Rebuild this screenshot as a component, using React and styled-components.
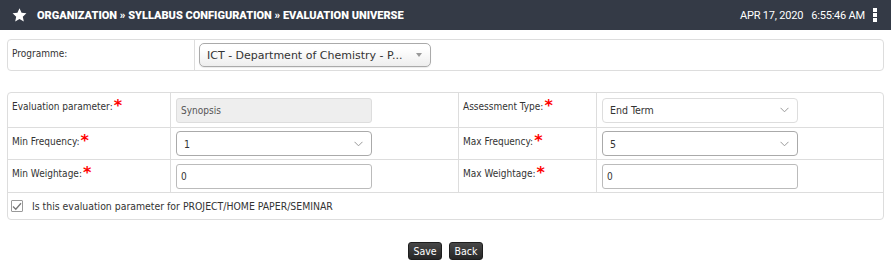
import React from 'react'
import styled, { createGlobalStyle } from 'styled-components'

const GlobalStyle = createGlobalStyle`
  html, body {
    margin: 0;
    padding: 0;
    background: #fff;
  }
  body {
    font-family: "DejaVu Sans Condensed", "DejaVu Sans", sans-serif;
    color: #333;
  }
  * { box-sizing: border-box; }
`

const fields = [
  { left: 'Evaluation parameter:', leftInput: { kind: 'disabled', value: 'Synopsis' }, right: 'Assessment Type:', rightInput: { kind: 'select', value: 'End Term', soft: true } },
  { left: 'Min Frequency:', leftInput: { kind: 'select', value: '1' }, right: 'Max Frequency:', rightInput: { kind: 'select', value: '5' } },
  { left: 'Min Weightage:', leftInput: { kind: 'text', value: '0' }, right: 'Max Weightage:', rightInput: { kind: 'text', value: '0' } },
]

const Chevron = () => (
  <svg width="9" height="6" viewBox="0 0 9 6">
    <path d="M0.5 0.8 L4.5 4.8 L8.5 0.8" fill="none" stroke="#999" strokeWidth="1" />
  </svg>
)

const Field = ({ kind, value, soft }) => {
  if (kind === 'select') {
    return (
      <SelectBox soft={soft}>
        <span>{value}</span>
        <Chevron />
      </SelectBox>
    )
  }
  return <TextBox disabled={kind === 'disabled'}>{value}</TextBox>
}

const Label = ({ children }) => (
  <LabelText>
    {children}
    <Req>*</Req>
  </LabelText>
)

export default function App() {
  return (
    <>
      <GlobalStyle />
      <Header>
        <HeaderLeft>
          <svg width="15" height="14" viewBox="0 0 24 23">
            <path
              d="M12 0.6 L15.4 7.9 L23.4 8.8 L17.4 14.3 L19.1 22.2 L12 18.2 L4.9 22.2 L6.6 14.3 L0.6 8.8 L8.6 7.9 Z"
              fill="#fff"
            />
          </svg>
          <Crumbs>ORGANIZATION » SYLLABUS CONFIGURATION » EVALUATION UNIVERSE</Crumbs>
        </HeaderLeft>
        <HeaderRight>
          <Clock>
            APR 17, 2020<Gap />6:55:46 AM
          </Clock>
          <Kebab>
            <i /><i /><i />
          </Kebab>
        </HeaderRight>
      </Header>

      <Page>
        <ProgrammeBox>
          <ProgLabel>Programme:</ProgLabel>
          <ProgCell>
            <DropButton>
              <span>ICT - Department of Chemistry - P...</span>
              <Triangle />
            </DropButton>
          </ProgCell>
        </ProgrammeBox>

        <FormGrid>
          {fields.map((row, i) => (
            <React.Fragment key={i}>
              <Cell col={1}><Label>{row.left}</Label></Cell>
              <Cell col={2} center><Field {...row.leftInput} /></Cell>
              <Cell col={3}><Label>{row.right}</Label></Cell>
              <Cell col={4} center><Field {...row.rightInput} /></Cell>
            </React.Fragment>
          ))}
          <CheckRow>
            <CheckBox>
              <svg width="10" height="9" viewBox="0 0 10 9">
                <path d="M1 4.5 L3.8 7.2 L9 1.2" fill="none" stroke="#777" strokeWidth="1.3" />
              </svg>
            </CheckBox>
            <CheckText>Is this evaluation parameter for PROJECT/HOME PAPER/SEMINAR</CheckText>
          </CheckRow>
        </FormGrid>

        <Actions>
          <DarkButton>Save</DarkButton>
          <DarkButton>Back</DarkButton>
        </Actions>
      </Page>
    </>
  )
}

const Header = styled.div`
  height: 30px;
  background: #343a46;
  display: flex;
  align-items: center;
  justify-content: space-between;
  padding: 0 14px 0 12px;
  color: #fff;
`

const HeaderLeft = styled.div`
  display: flex;
  align-items: center;
  gap: 10px;
`

const Crumbs = styled.div`
  font-family: Roboto, "Liberation Sans", sans-serif;
  font-weight: 900;
  font-size: 11px;
  letter-spacing: 0;
  padding-top: 1px;
`

const HeaderRight = styled.div`
  display: flex;
  align-items: center;
  gap: 8px;
`

const Clock = styled.div`
  font-family: Roboto, "Liberation Sans", sans-serif;
  font-size: 11px;
  letter-spacing: -0.2px;
  padding-top: 1px;
`

const Gap = styled.span`
  display: inline-block;
  width: 8px;
`

const Kebab = styled.div`
  display: flex;
  flex-direction: column;
  gap: 1px;
  i {
    display: block;
    width: 4px;
    height: 4px;
    background: #fff;
  }
`

const Page = styled.div`
  padding: 9px 7px 0;
`

const ProgrammeBox = styled.div`
  display: grid;
  grid-template-columns: 187px 1fr;
  height: 32px;
  border: 1px solid #ddd;
  border-radius: 4px;
`

const ProgLabel = styled.div`
  border-right: 1px solid #ddd;
  padding: 8px 4px;
  font-size: 10px;
`

const ProgCell = styled.div`
  display: flex;
  align-items: center;
  padding-left: 4px;
`

const DropButton = styled.div`
  width: 232px;
  height: 24px;
  display: flex;
  align-items: center;
  justify-content: space-between;
  padding: 0 8px 0 7px;
  border: 1px solid #aaa;
  border-radius: 5px;
  background: linear-gradient(#fff 20%, #eee 100%);
  box-shadow: 0 1px 1px rgba(0, 0, 0, 0.08);
  font-family: "DejaVu Sans", Verdana, sans-serif;
  font-size: 11px;
  color: #333;
`

const Triangle = styled.span`
  width: 0;
  height: 0;
  border-left: 3px solid transparent;
  border-right: 3px solid transparent;
  border-top: 4px solid #999;
`

const FormGrid = styled.div`
  margin-top: 21px;
  display: grid;
  grid-template-columns: 163px 288px 138px 1fr;
  grid-template-rows: 35px 32px 33px 26px;
  border: 1px solid #ddd;
  border-radius: 4px;
`

const Cell = styled.div`
  border-bottom: 1px solid #ddd;
  border-right: ${(p) => (p.col < 4 ? '1px solid #ddd' : 'none')};
  padding: ${(p) => (p.center ? '0 4px 0 5px' : '8px 4px 0')};
  display: flex;
  align-items: ${(p) => (p.center ? 'center' : 'flex-start')};
`

const LabelText = styled.div`
  font-size: 10px;
  line-height: 12px;
  color: #333;
  white-space: nowrap;
`

const Req = styled.span`
  color: #f00;
  font-family: "DejaVu Sans", sans-serif;
  font-weight: 700;
  font-size: 16px;
  line-height: 0;
  vertical-align: -1px;
  margin-left: 1px;
`

const TextBox = styled.div`
  width: 196px;
  height: 25px;
  display: flex;
  align-items: center;
  padding: 0 4px;
  border: 1px solid ${(p) => (p.disabled ? '#ddd' : '#bbb')};
  border-radius: 3px;
  background: ${(p) => (p.disabled ? '#eee' : '#fff')};
  color: ${(p) => (p.disabled ? '#555' : '#333')};
  font-size: 10px;
`

const SelectBox = styled.div`
  width: 196px;
  height: 25px;
  display: flex;
  align-items: center;
  justify-content: space-between;
  padding: 0 8px 0 7px;
  border: 1px solid ${(p) => (p.soft ? '#ddd' : '#aaa')};
  border-radius: 4px;
  background: #fff;
  color: #333;
  font-size: 10.5px;
`

const CheckRow = styled.div`
  grid-column: 1 / -1;
  display: flex;
  align-items: center;
  gap: 9px;
  padding-left: 3px;
`

const CheckBox = styled.div`
  width: 12px;
  height: 12px;
  border: 1px solid #999;
  border-radius: 1px;
  display: flex;
  align-items: center;
  justify-content: center;
  background: #fff;
`

const CheckText = styled.div`
  font-size: 10.4px;
  color: #333;
`

const Actions = styled.div`
  display: flex;
  justify-content: center;
  gap: 7px;
  margin-top: 22px;
`

const DarkButton = styled.button`
  height: 18px;
  width: 34px;
  padding: 0;
  border: 1px solid #1e1e1e;
  border-radius: 3px;
  background: linear-gradient(#474747, #262626);
  color: #fff;
  font-family: "DejaVu Sans Condensed", sans-serif;
  font-size: 10.5px;
`
